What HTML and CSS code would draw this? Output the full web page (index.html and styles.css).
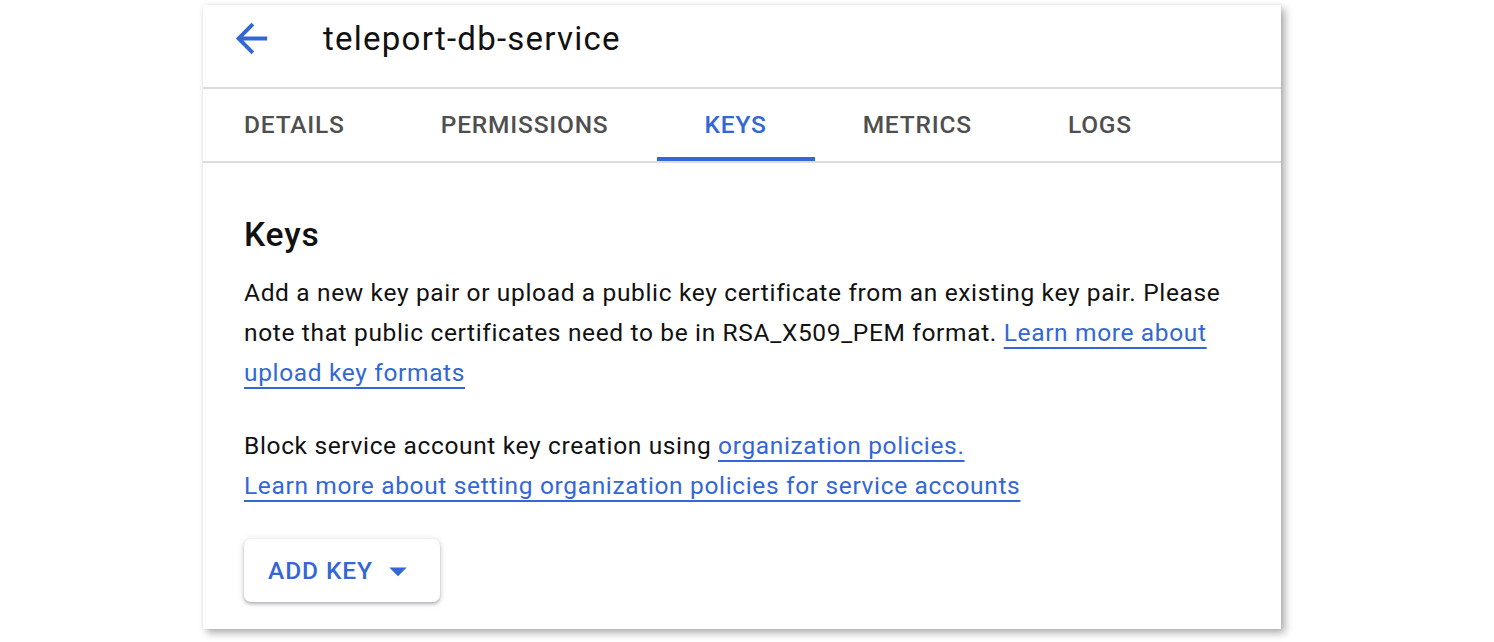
FILE: index.html
```html
<!DOCTYPE html>
<html lang="en">
<head>
<meta charset="utf-8">
<title>teleport-db-service</title>
<link rel="stylesheet" href="styles.css">
</head>
<body>
<div class="page">
  <div class="card">
    <header class="header">
      <span class="back">
        <svg viewBox="0 0 24 24" width="47" height="47"><path fill="#3367d6" d="M20 11H7.83l5.59-5.59L12 4l-8 8 8 8 1.41-1.41L7.83 13H20v-2z"/></svg>
      </span>
      <h1 class="title">teleport-db-service</h1>
    </header>
    <nav class="tabs">
      <span class="tab">DETAILS</span>
      <span class="tab">PERMISSIONS</span>
      <span class="tab active">KEYS</span>
      <span class="tab">METRICS</span>
      <span class="tab">LOGS</span>
    </nav>
    <section class="content">
      <h2 class="heading">Keys</h2>
      <p class="para">Add a new key pair or upload a public key certificate from an existing key pair. Please note that public certificates need to be in RSA_X509_PEM format. <a class="link" href="#">Learn more about upload key formats</a></p>
      <p class="para">Block service account key creation using <a class="link" href="#">organization policies.</a><br><a class="link" href="#">Learn more about setting organization policies for service accounts</a></p>
      <button class="btn">
        <span>ADD KEY</span>
        <svg class="caret" viewBox="0 0 24 24" width="42" height="42"><path fill="#3367d6" d="M7 10l5 5 5-5z"/></svg>
      </button>
    </section>
  </div>
</div>
</body>
</html>
```
FILE: styles.css
```css
* { box-sizing: border-box; }
html, body {
  margin: 0;
  padding: 0;
  background: #ffffff;
  font-family: Roboto, "Liberation Sans", sans-serif;
}
.page {
  padding: 5px 0 13px 203px;
}
.card {
  width: 1078px;
  height: 624px;
  background: #fff;
  box-shadow: 4px 4px 8px rgba(0,0,0,0.32), 0 0 3px rgba(0,0,0,0.08);
  overflow: hidden;
}
.header {
  height: 84px;
  display: flex;
  align-items: center;
  padding: 0 0 15px 25px;
  border-bottom: 2px solid #dadce0;
}
.back {
  display: flex;
  width: 47px;
  height: 47px;
}
.title {
  margin: 0 0 0 48px;
  font-size: 33px;
  font-weight: 400;
  color: #111;
  letter-spacing: 1.25px;
}
.tabs {
  display: flex;
  height: 74px;
  margin-left: -7px;
  border-bottom: 2px solid #dadce0;
}
.tab {
  display: flex;
  align-items: center;
  justify-content: center;
  min-width: 158px;
  padding: 2px 48px 0;
  font-size: 24.5px;
  font-weight: 500;
  letter-spacing: 0.8px;
  color: #4f4f4f;
  border-bottom: 4px solid transparent;
}
.tab.active {
  color: #3367d6;
  border-bottom-color: #3367d6;
}
.content {
  padding: 52px 41px 0 41px;
}
.heading {
  margin: 0;
  font-size: 33.6px;
  line-height: 40px;
  font-weight: 500;
  color: #111;
  letter-spacing: 0.8px;
}
.para {
  margin: 18px 0 33px;
  font-size: 24.5px;
  line-height: 40px;
  color: #111;
  letter-spacing: 0.65px;
}
.para + .para {
  margin-top: 33px;
}
.link {
  color: #3367d6;
  text-decoration: underline;
  text-decoration-thickness: 2px;
  text-underline-offset: 6px;
}
.btn {
  display: inline-flex;
  align-items: center;
  height: 63px;
  margin: 0;
  padding: 0 21px 0 24px;
  gap: 4px;
  border: none;
  border-radius: 7px;
  background: #fff;
  font-family: Roboto, "Liberation Sans", sans-serif;
  font-size: 24.5px;
  font-weight: 500;
  letter-spacing: 0.9px;
  color: #3367d6;
  box-shadow: 0 2px 3px rgba(60,64,67,0.3), 0 1px 6px 1px rgba(60,64,67,0.15);
}
.caret {
  display: block;
}
```
